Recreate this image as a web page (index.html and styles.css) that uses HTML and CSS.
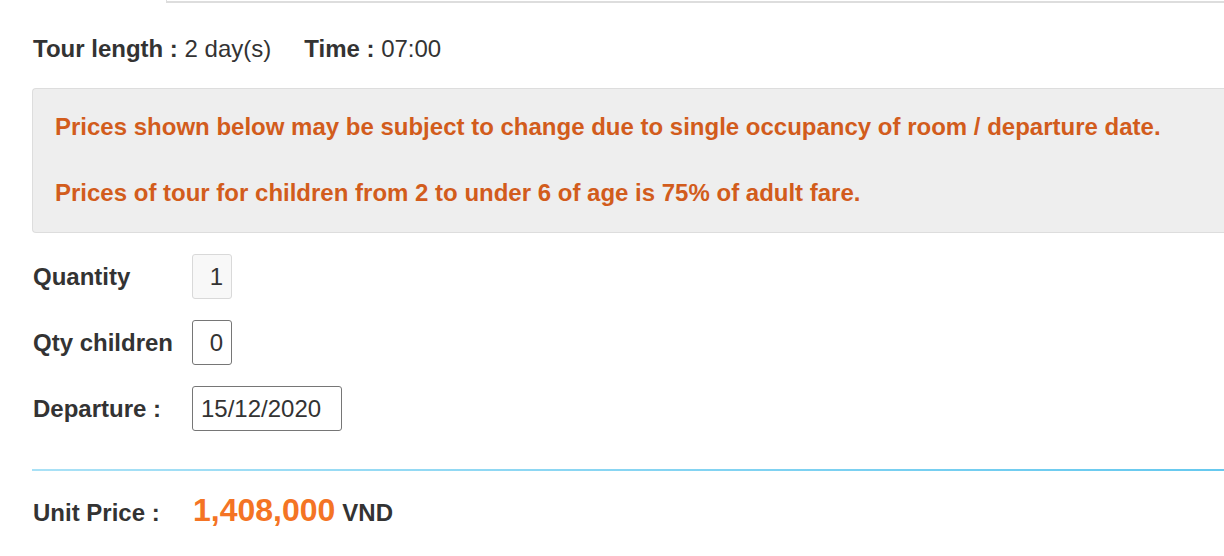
FILE: index.html
```html
<!DOCTYPE html>
<html>
<head>
<meta charset="utf-8">
<link rel="stylesheet" href="styles.css">
</head>
<body>
<div class="tabs">
  <div class="tab-active"></div>
  <div class="tab-rest"></div>
</div>
<div class="content">
  <div class="meta">
    <span class="meta-item"><b>Tour length :</b> 2 day(s)</span>
    <span class="meta-item"><b>Time :</b> 07:00</span>
  </div>
  <div class="notice">
    <p>Prices shown below may be subject to change due to single occupancy of room / departure date.</p>
    <p>Prices of tour for children from 2 to under 6 of age is 75% of adult fare.</p>
  </div>
  <div class="form">
    <div class="row">
      <label class="label">Quantity</label>
      <input class="input num disabled" type="text" value="1" disabled>
    </div>
    <div class="row">
      <label class="label">Qty children</label>
      <input class="input num" type="text" value="0">
    </div>
    <div class="row">
      <label class="label">Departure :</label>
      <input class="input date" type="text" value="15/12/2020">
    </div>
  </div>
  <div class="divider"></div>
  <div class="price-row">
    <span class="label">Unit Price :</span>
    <span class="price">1,408,000</span>
    <span class="currency">VND</span>
  </div>
</div>
</body>
</html>
```

FILE: styles.css
```css
html, body {
  margin: 0;
  padding: 0;
  background: #fff;
}
body {
  font-family: "Liberation Sans", Arial, sans-serif;
  color: #333;
  width: 1224px;
  height: 556px;
  overflow: hidden;
}
.tabs {
  display: flex;
  height: 3px;
}
.tab-active {
  width: 166px;
  border-right: 1px solid #ddd;
}
.tab-rest {
  flex: 1;
  border-bottom: 2px solid #ddd;
  height: 1px;
}
.content {
  padding-left: 32px;
}
.meta {
  display: flex;
  gap: 33px;
  font-size: 24px;
  line-height: 30px;
  margin-top: 31px;
  padding-left: 1px;
}
.meta b {
  font-weight: bold;
}
.notice {
  margin-top: 24px;
  background: #eee;
  border: 1px solid #ddd;
  border-right: none;
  border-radius: 4px 0 0 4px;
  padding: 24px 0 24px 22px;
  height: 95px;
  display: flex;
  flex-direction: column;
  gap: 38px;
}
.notice p {
  margin: 0;
  color: #d25c1c;
  font-weight: bold;
  font-size: 24px;
  line-height: 28px;
  white-space: nowrap;
}
.form {
  margin-top: 21px;
  display: flex;
  flex-direction: column;
  gap: 21px;
}
.row {
  display: flex;
  align-items: center;
}
.label {
  width: 159px;
  font-weight: bold;
  font-size: 24px;
  padding-left: 1px;
}
.input {
  box-sizing: border-box;
  height: 45px;
  font-family: "Liberation Sans", Arial, sans-serif;
  font-size: 24px;
  color: #333;
  border: 1px solid #767676;
  border-radius: 3px;
  background: #fff;
  padding: 0 8px;
  outline: none;
}
.num {
  width: 40px;
  text-align: right;
}
.disabled {
  background: #f8f8f8;
  border-color: #d9d9d9;
}
.date {
  width: 150px;
}
.divider {
  margin-top: 38px;
  height: 2px;
  background: linear-gradient(to right, #a9e1f6, #66c9ef);
}
.price-row {
  display: flex;
  align-items: baseline;
  margin-top: 21px;
  line-height: 36px;
}
.price {
  color: #f47424;
  font-weight: bold;
  font-size: 32px;
  margin-left: 1px;
}
.currency {
  font-weight: bold;
  font-size: 24px;
  margin-left: 7px;
}
```
